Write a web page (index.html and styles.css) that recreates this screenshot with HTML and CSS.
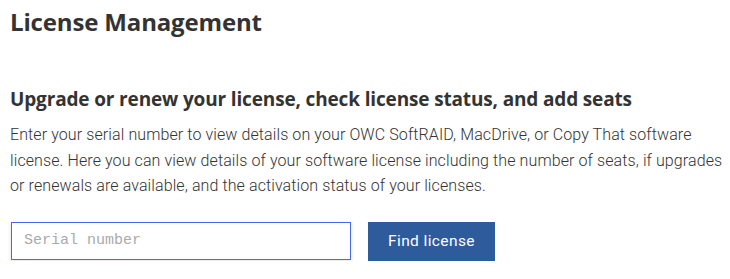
FILE: index.html
```html
<!DOCTYPE html>
<html lang="en">

<head>
    <meta charset="utf-8">
    <meta name="viewport" content="width=device-width, initial-scale=1.0">
    <title>License Management</title>
    <link rel="stylesheet" href="styles.css">
</head>

<body>

    <main class="licens">
        <h1>License Management</h1>

        <section class="opslag">
            <h2>Upgrade or renew your license, check license status, and add seats</h2>
            <p>Enter your serial number to view details on your OWC SoftRAID, MacDrive, or Copy That software<br>
                license. Here you can view details of your software license including the number of seats, if upgrades<br>
                or renewals are available, and the activation status of your licenses.</p>

            <form class="soeg">
                <input type="text" class="serienr" placeholder="Serial number">
                <button type="button" class="find">Find license</button>
            </form>
        </section>
    </main>

</body></html>
```

FILE: styles.css
```css
body {
    margin: 0;
    background-color: white;
    color: #333;
}

.licens {
    padding: 0 10px;
}

h1 {
    margin: 0;
    padding-top: 6px;
    font-family: 'Open Sans', sans-serif;
    font-weight: 700;
    font-size: 24px;
    line-height: 32px;
    color: #333;
    letter-spacing: -0.15px;
}

.opslag {
    margin-top: 48px;
}

h2 {
    margin: 0;
    font-family: 'Open Sans', sans-serif;
    font-weight: 700;
    font-size: 19px;
    line-height: 26px;
    color: #333;
    letter-spacing: -0.15px;
}

.opslag p {
    margin: 10px -10px 0 0;
    font-family: 'Roboto', sans-serif;
    font-weight: 300;
    font-size: 16px;
    line-height: 25.5px;
    color: #333;
    letter-spacing: 0.1px;
    white-space: nowrap;
}

.soeg {
    display: flex;
    gap: 17px;
    margin-top: 23px;
}

.serienr {
    width: 340px;
    height: 38px;
    box-sizing: border-box;
    margin-left: 1px;
    padding: 0 12px;
    border: 1px solid #4a68e8;
    box-shadow: 0 1px 4px rgba(0, 0, 0, 0.12);
    font-family: 'Liberation Mono', monospace;
    font-size: 15px;
    color: #333;
    outline: none;
}

.serienr::placeholder {
    color: #aaa;
}

.find {
    height: 39px;
    padding: 0 20px;
    border: none;
    background-color: #2e5b9c;
    color: white;
    font-family: 'Roboto', sans-serif;
    font-size: 15.5px;
    letter-spacing: 0.4px;
    cursor: pointer;
}
```
